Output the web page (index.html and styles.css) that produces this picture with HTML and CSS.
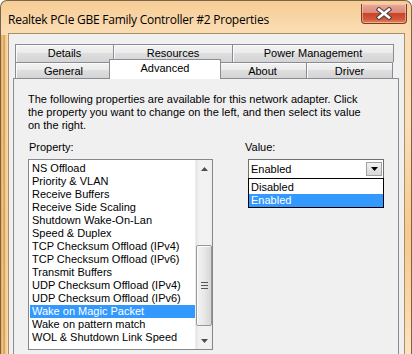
FILE: index.html
```html
<!DOCTYPE html>
<html lang="en">
<head>
  <meta charset="UTF-8">
  <meta name="viewport" content="width=device-width, initial-scale=1.0">
  <title>Realtek PCIe GBE Family Controller #2 Properties</title>
  <link rel="stylesheet" href="styles.css">
</head>
<body>
  <div class="window">
    <!-- Title bar -->
    <div class="titlebar">
      <span class="title">Realtek PCIe GBE Family Controller #2 Properties</span>
      <div class="close-btn" title="Close">
        <svg width="16" height="13" viewBox="0 0 16 13">
          <path d="M3 2.5 L13 10.5 M13 2.5 L3 10.5" stroke="#4a4040" stroke-width="4.6" stroke-linecap="square"/>
          <path d="M3 2.5 L13 10.5 M13 2.5 L3 10.5" stroke="#ffffff" stroke-width="2.6" stroke-linecap="square"/>
        </svg>
      </div>
    </div>

    <div class="client">
      <!-- Tabs -->
      <div class="tabs">
        <div class="tab-row back">
          <div class="tab tab-details">Details</div>
          <div class="tab tab-resources">Resources</div>
          <div class="tab tab-power">Power Management</div>
        </div>
        <div class="tab-row front">
          <div class="tab tab-general">General</div>
          <div class="tab tab-advanced selected">Advanced</div>
          <div class="tab tab-about">About</div>
          <div class="tab tab-driver">Driver</div>
        </div>
      </div>

      <!-- Advanced page -->
      <div class="page">
        <p class="intro">The following properties are available for this network adapter. Click the property you want to change on the left, and then select its value on the right.</p>

        <div class="fields">
          <div class="field field-property">
            <div class="field-label">Property:</div>
            <div class="listbox">
              <ul class="list-items">
                <li>NS Offload</li>
                <li>Priority &amp; VLAN</li>
                <li>Receive Buffers</li>
                <li>Receive Side Scaling</li>
                <li>Shutdown Wake-On-Lan</li>
                <li>Speed &amp; Duplex</li>
                <li>TCP Checksum Offload (IPv4)</li>
                <li>TCP Checksum Offload (IPv6)</li>
                <li>Transmit Buffers</li>
                <li>UDP Checksum Offload (IPv4)</li>
                <li>UDP Checksum Offload (IPv6)</li>
                <li class="selected">Wake on Magic Packet</li>
                <li>Wake on pattern match</li>
                <li>WOL &amp; Shutdown Link Speed</li>
              </ul>
              <div class="scrollbar">
                <div class="scroll-arrow">
                  <svg width="7" height="4" viewBox="0 0 7 4"><path d="M0 4 L3.5 0 L7 4 Z" fill="#4d4d4d"/></svg>
                </div>
                <div class="scroll-track">
                  <div class="scroll-thumb">
                    <svg width="7" height="7" viewBox="0 0 7 7">
                      <path d="M0 0.5 H7 M0 3.5 H7 M0 6.5 H7" stroke="#555" stroke-width="1"/>
                    </svg>
                  </div>
                </div>
                <div class="scroll-arrow">
                  <svg width="7" height="4" viewBox="0 0 7 4"><path d="M0 0 L3.5 4 L7 0 Z" fill="#4d4d4d"/></svg>
                </div>
              </div>
            </div>
          </div>

          <div class="field field-value">
            <div class="field-label">Value:</div>
            <div class="combo">
              <span class="combo-text">Enabled</span>
              <span class="combo-btn">
                <svg width="7" height="4" viewBox="0 0 7 4"><path d="M0 0 L3.5 4 L7 0 Z" fill="#000"/></svg>
              </span>
              <ul class="dropdown">
                <li>Disabled</li>
                <li class="selected">Enabled</li>
              </ul>
            </div>
          </div>
        </div>
      </div>
    </div>
  </div>
</body>
</html>
```

FILE: styles.css
```css
:root {
  --client-bg: #f0f0f0;
  --tab-border: #898c95;
  --list-border: #828790;
  --highlight: #3399ff;
  --text-color: #000000;
}

* {
  box-sizing: border-box;
}

html, body {
  margin: 0;
  padding: 0;
}

body {
  width: 412px;
  height: 354px;
  overflow: hidden;
  font-family: "Liberation Sans", Arial, sans-serif;
  font-size: 11px;
  color: var(--text-color);
  background: #ffffff;
}

/* Window frame */
.window {
  height: 354px;
  padding: 0 6px 0 7px;
  border: 1px solid #76644c;
  border-bottom: none;
  border-radius: 7px 7px 0 0;
  background:
    linear-gradient(90deg, #e9a64c 0, #f6cd8c 2px, #b98a4a 3px, #f3c27c 4px, #fad7a4 6px, transparent 7px) left 34px / 7px 100% no-repeat,
    linear-gradient(180deg, #f6cd95 0, #fbdcb2 30px, #fcdfb8 120px, #f8c98a 230px, #fbd5a2 300px, #fde4c4 354px);
  display: flex;
  flex-direction: column;
}

.titlebar {
  height: 32px;
  flex-shrink: 0;
  display: flex;
  justify-content: space-between;
  align-items: flex-start;
}

.title {
  margin-top: 11px;
  font-family: "Open Sans", "Noto Sans", sans-serif;
  font-size: 12px;
  line-height: 15px;
  letter-spacing: -0.25px;
  color: #000;
}

.close-btn {
  width: 46px;
  height: 20px;
  margin-top: 3px;
  margin-right: -2px;
  border: 1px solid #7d3a2a;
  border-top: none;
  border-radius: 0 0 4px 4px;
  background: linear-gradient(180deg, #e9a99a 0, #dc8a77 45%, #c8442a 50%, #d2583a 80%, #e08a63 100%);
  box-shadow: inset 0 0 0 1px rgba(255, 220, 200, 0.5);
  display: flex;
  align-items: center;
  justify-content: center;
}

/* Client area */
.client {
  flex: 1;
  overflow: hidden;
  background: var(--client-bg);
  border: 1px solid #a98f6c;
  border-bottom: none;
}

.tabs {
  padding: 10px 0 0 6px;
}

.tab-row {
  display: flex;
}

.tab {
  border: 1px solid var(--tab-border);
  border-bottom: none;
  margin-left: -1px;
  background: linear-gradient(180deg, #f3f3f3 0, #ebebeb 45%, #dedede 50%, #d4d4d4 100%);
  box-shadow: inset 1px 1px 0 #fbfbfb;
  text-align: center;
  line-height: 16px;
  white-space: nowrap;
}

.tab:first-child {
  margin-left: 0;
}

.tab-row.back .tab {
  height: 18px;
  line-height: 17px;
}

.tab-row.front .tab {
  height: 16px;
  line-height: 16px;
}

.tab-details { width: 99px; }
.tab-resources { width: 120px; }
.tab-power { width: 162px; }
.tab-general { width: 97px; }
.tab-about { width: 89px; }
.tab-driver { width: 87px; }

.tab-row.front .tab.selected {
  position: relative;
  z-index: 1;
  width: 112px;
  height: 20px;
  margin: -3px -2px -1px -3px;
  background: #ffffff;
  box-shadow: none;
  line-height: 17px;
}

.page {
  margin: 0 5px 0 4px;
  height: 300px;
  border: 1px solid var(--tab-border);
  background: var(--client-bg);
  padding: 14px 14px 0 14px;
}

.intro {
  margin: 0;
  width: 335px;
  line-height: 13px;
}

.fields {
  display: flex;
  margin-top: 9px;
}

.field-label {
  line-height: 13px;
  margin-bottom: 5px;
  padding-left: 1px;
}

.field-property {
  width: 216px;
}

/* Property list */
.listbox {
  width: 185px;
  height: 191px;
  border: 1px solid var(--list-border);
  background: #ffffff;
  display: flex;
}

.list-items {
  flex: 1;
  margin: 0;
  padding: 2px 0 0 1px;
  list-style: none;
}

.list-items li {
  height: 13px;
  line-height: 13px;
  padding-left: 2px;
  white-space: nowrap;
}

.list-items li.selected,
.dropdown li.selected {
  background: var(--highlight);
  color: #ffffff;
}

.scrollbar {
  width: 17px;
  display: flex;
  flex-direction: column;
  background: linear-gradient(90deg, #e3e3e3 0, #f2f2f2 3px, #f2f2f2 13px, #e8e8e8 17px);
  border-left: 1px solid #eeeeee;
}

.scroll-arrow {
  height: 17px;
  display: flex;
  align-items: center;
  justify-content: center;
}

.scroll-track {
  flex: 1;
  padding-top: 68px;
}

.scroll-thumb {
  height: 81px;
  border: 1px solid #979797;
  border-radius: 2px;
  background: linear-gradient(90deg, #f3f3f3 0, #e8e8e8 50%, #d6d6d6 100%);
  box-shadow: inset 1px 1px 0 #fdfdfd;
  display: flex;
  align-items: center;
  justify-content: center;
}

/* Value combo */
.field-value {
  flex: 1;
}

.combo {
  position: relative;
  width: 136px;
  height: 20px;
  margin: 1px 0 0 4px;
  border: 1px solid #707070;
  background: #ffffff;
  display: flex;
  align-items: center;
  justify-content: space-between;
  padding: 0 1px 0 2px;
}

.combo-text {
  line-height: 13px;
}

.combo-btn {
  width: 16px;
  height: 14px;
  border: 1px solid #a0a0a0;
  background: linear-gradient(180deg, #f2f2f2 0, #e4e4e4 50%, #d8d8d8 100%);
  display: flex;
  align-items: center;
  justify-content: center;
}

.dropdown {
  position: absolute;
  top: 18px;
  left: -1px;
  width: 136px;
  height: 30px;
  margin: 0;
  padding: 2px 0 0;
  list-style: none;
  border: 1px solid #000000;
  background: #ffffff;
}

.dropdown li {
  height: 13px;
  line-height: 13px;
  padding-left: 2px;
}
```
